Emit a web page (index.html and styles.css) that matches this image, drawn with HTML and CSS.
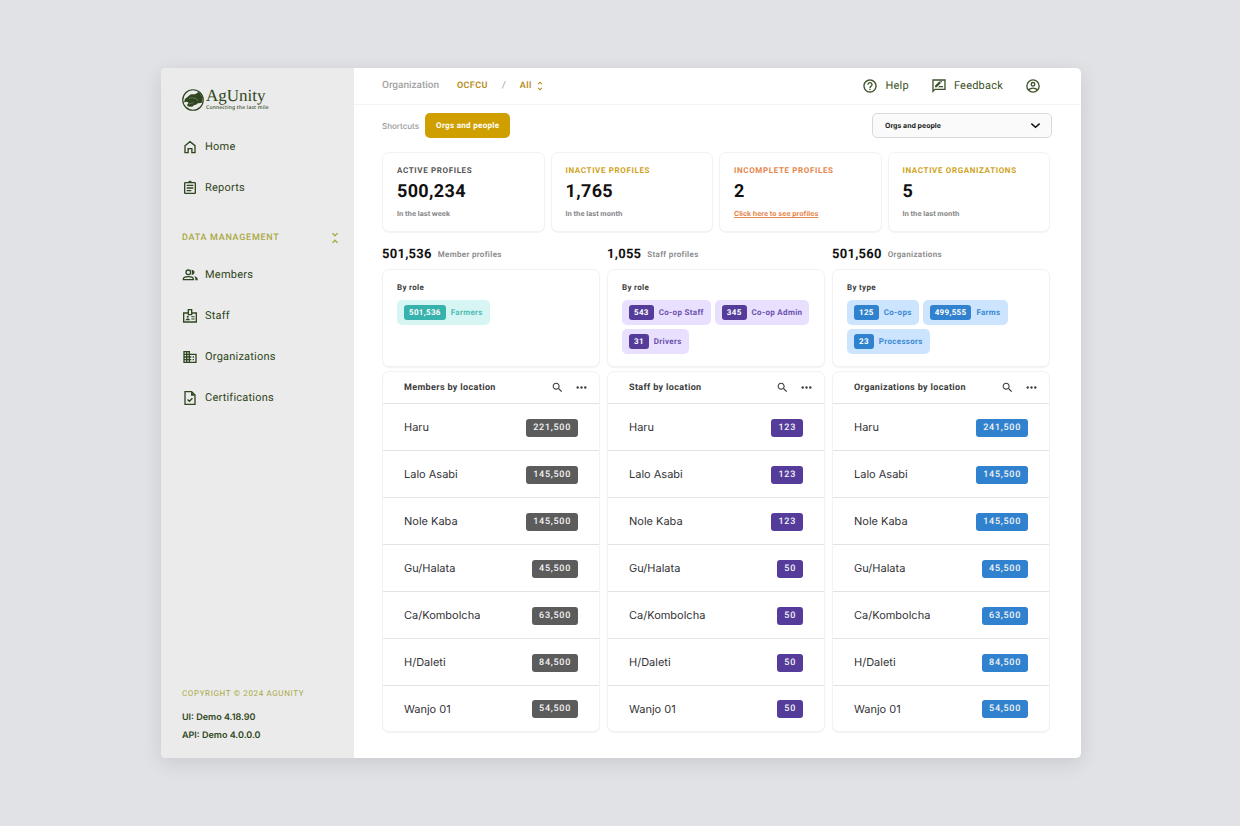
FILE: index.html
```html
<!DOCTYPE html>
<html lang="en">
<head>
<meta charset="utf-8">
<meta name="viewport" content="width=device-width, initial-scale=1">
<title>AgUnity – Orgs and people</title>
<link rel="stylesheet" href="styles.css">
</head>
<body>
<svg class="sprite" aria-hidden="true">
  <symbol id="i-search" viewBox="0 0 24 24"><path d="M15.5 14h-.79l-.28-.27C15.41 12.59 16 11.11 16 9.5 16 5.91 13.09 3 9.5 3S3 5.91 3 9.5 5.91 16 9.5 16c1.61 0 3.09-.59 4.23-1.57l.27.28v.79l5 4.99L20.49 19l-4.99-5zm-6 0C7.01 14 5 11.99 5 9.5S7.01 5 9.5 5 14 7.01 14 9.5 11.99 14 9.5 14z"/></symbol>
  <symbol id="i-more" viewBox="0 0 24 24"><circle cx="5" cy="12" r="2.200"/><circle cx="12" cy="12" r="2.200"/><circle cx="19" cy="12" r="2.200"/></symbol>
</svg>
<div class="window">
  <aside class="sidebar">
    <a class="logo" href="#" aria-label="AgUnity home">
      <svg class="logo-mark" viewBox="0 0 44 44" aria-hidden="true">
        <circle cx="22" cy="22" r="20.500" fill="none" stroke="currentColor" stroke-width="2.400"/>
        <path d="M7 19c4-2 6-6 10-8 4-1.500 7 0 10-1l6-4c5 4 8 9 8 15 0 3-1 5-2 7-3 0-5 1-7 0-2 3-5 4-8 4-1 3-4 4-7 3-3 1-6 0-7-3l3-4c-2-3-5-3-8-1-1-3 0-6 2-8z" fill="currentColor"/>
        <path d="M14 20c3-3 6-3 9-2 4 1 7 1 9 6M14 30c3-2 6-1 9-3" fill="none" stroke="#ebebeb" stroke-width="0.900" opacity="0.600"/>
      </svg>
      <span class="logo-words"><span class="logo-name">AgUnity</span><span class="logo-tag">Connecting the last mile</span></span>
    </a>
    <nav class="nav">
      <a class="nav-item" href="#"><svg class="icon" viewBox="0 0 24 24" aria-hidden="true"><path class="line" d="M4.500 10 12 4l7.500 6v10.500h-4.700V14.500h-5.600v6H4.500z"/></svg>Home</a>
      <a class="nav-item" href="#"><svg class="icon" viewBox="0 0 24 24" aria-hidden="true"><path d="M7 15h7v2H7zm0-4h10v2H7zm0-4h10v2H7zm12-4h-4.180C14.400 1.840 13.300 1 12 1c-1.300 0-2.400.840-2.820 2H5c-1.100 0-2 .900-2 2v14c0 1.100.900 2 2 2h14c1.100 0 2-.900 2-2V5c0-1.100-.900-2-2-2zm0 16H5V5h14v14z"/></svg>Reports</a>
      <button class="nav-group" type="button">DATA MANAGEMENT<svg class="icon" viewBox="0 0 24 24" aria-hidden="true"><path d="M7.410 18.590 8.830 20 12 16.830 15.170 20l1.410-1.410L12 14l-4.590 4.590zm9.180-13.180L15.170 4 12 7.170 8.830 4 7.410 5.410 12 10l4.590-4.590z"/></svg></button>
      <a class="nav-item" href="#"><svg class="icon" viewBox="0 0 24 24" aria-hidden="true"><circle class="line" cx="9.500" cy="8" r="3.500"/><path class="line" d="M2 19v-1c0-2.500 4-3.600 7.500-3.600S17 15.500 17 18v1z"/><path d="M14 12c2.500 0 4.800-1.500 4.800-4S16.500 4 14 4c1.600 2.400 1.600 5.600 0 8zM18 13.800c1.500 1.100 2 2.500 2 4.200v2h3.500v-2c0-2.200-2.600-3.700-5.500-4.200z"/></svg>Members</a>
      <a class="nav-item" href="#"><svg class="icon" viewBox="0 0 24 24" aria-hidden="true"><path class="line" d="M9.500 7.500H2.500v13.500h19V7.500h-7M9.500 10V2.500h5V10z"/><circle cx="8.700" cy="13.200" r="1.600"/><path d="M5.500 18.500c0-2.200 1.300-2.900 3.200-2.900s3.200.700 3.200 2.900zM14 12.500h5V14h-5zM14 15.800h5v1.500h-5z"/></svg>Staff</a>
      <a class="nav-item" href="#"><svg class="icon" viewBox="0 0 24 24" aria-hidden="true"><path d="M12 7V3H2v18h20V7H12zM6 19H4v-2h2v2zm0-4H4v-2h2v2zm0-4H4V9h2v2zm0-4H4V5h2v2zm4 12H8v-2h2v2zm0-4H8v-2h2v2zm0-4H8V9h2v2zm0-4H8V5h2v2zm10 12h-8v-2h2v-2h-2v-2h2v-2h-2V9h8v10zm-2-8h-2v2h2v-2zm0 4h-2v2h2v-2z"/></svg>Organizations</a>
      <a class="nav-item" href="#"><svg class="icon" viewBox="0 0 24 24" aria-hidden="true"><path class="line" d="M14.500 2.500H4.500v19h15V7.500zM8.300 14.300l2.700 2.700 4.700-4.700"/><path d="M13.500 2.500v6h6z"/></svg>Certifications</a>
    </nav>
    <footer class="side-foot">
      <p class="copyright">COPYRIGHT © 2024 AGUNITY</p>
      <p class="version">UI: Demo 4.18.90</p>
      <p class="version">API: Demo 4.0.0.0</p>
    </footer>
  </aside>

  <main class="main">
    <header class="topbar">
      <div class="crumbs">
        <span class="crumb-label">Organization</span>
        <a class="crumb" href="#">OCFCU</a>
        <span class="crumb-sep">/</span>
        <button class="crumb" type="button">All<svg class="crumb-icon" viewBox="0 0 24 24" aria-hidden="true"><path d="M12 5.830 15.170 9l1.410-1.410L12 3 7.410 7.590 8.830 9 12 5.830zm0 12.340L8.830 15l-1.410 1.410L12 21l4.590-4.590L15.170 15 12 18.170z"/></svg></button>
      </div>
      <div class="tools">
        <a class="tool" href="#"><svg class="icon" viewBox="0 0 24 24" aria-hidden="true"><path d="M11 18h2v-2h-2v2zm1-16C6.480 2 2 6.480 2 12s4.480 10 10 10 10-4.480 10-10S17.520 2 12 2zm0 18c-4.410 0-8-3.590-8-8s3.590-8 8-8 8 3.590 8 8-3.590 8-8 8zm0-14c-2.210 0-4 1.790-4 4h2c0-1.100.900-2 2-2s2 .900 2 2c0 2-3 1.750-3 5h2c0-2.250 3-2.500 3-5 0-2.210-1.790-4-4-4z"/></svg>Help</a>
        <a class="tool" href="#"><svg class="icon" viewBox="0 0 24 24" aria-hidden="true"><path class="line" d="M3 3h18v14H6l-3 3z"/><path d="M6 14v-2.500l6.500-6.500L15 7.500 8.500 14zM15.700 6.800l-2.500-2.500 1-1 2.500 2.500zM10.500 14l2-2H18v2z"/></svg>Feedback</a>
        <button class="tool" type="button" aria-label="Account"><svg class="icon" viewBox="0 0 24 24" aria-hidden="true"><circle class="line" cx="12" cy="12" r="9.200"/><circle class="line" cx="12" cy="9.500" r="2.700"/><path class="line" d="M5.500 18c1.500-2 4-2.800 6.500-2.800s5 .800 6.500 2.800"/></svg></button>
      </div>
    </header>

    <div class="shortcuts">
      <span class="shortcuts-label">Shortcuts</span>
      <button class="shortcut" type="button">Orgs and people</button>
      <div class="picker">
        <select class="picker-select" aria-label="View"><option>Orgs and people</option></select>
        <svg class="picker-icon" viewBox="0 0 24 24" aria-hidden="true"><path d="m3 8 9 8 9-8" fill="none" stroke="currentColor" stroke-width="3.200"/></svg>
      </div>
    </div>

    <div class="content">
      <section class="stats">
        <article class="card stat"><h2 class="stat-title">ACTIVE PROFILES</h2><p class="stat-value">500,234</p><p class="stat-note">In the last week</p></article>
        <article class="card stat"><h2 class="stat-title gold">INACTIVE PROFILES</h2><p class="stat-value">1,765</p><p class="stat-note">In the last month</p></article>
        <article class="card stat"><h2 class="stat-title orange">INCOMPLETE PROFILES</h2><p class="stat-value">2</p><p class="stat-note"><a class="stat-link" href="#">Click here to see profiles</a></p></article>
        <article class="card stat"><h2 class="stat-title gold">INACTIVE ORGANIZATIONS</h2><p class="stat-value">5</p><p class="stat-note">In the last month</p></article>
      </section>

      <div class="groups">
        <section class="group members">
          <h2 class="total"><span class="total-value">501,536</span><span class="total-label">Member profiles</span></h2>
          <div class="card roles">
            <h3 class="roles-title">By role</h3>
            <ul class="chips">
              <li class="chip"><span class="chip-count">501,536</span>Farmers</li>
            </ul>
          </div>
          <div class="card">
            <table class="places">
              <thead><tr><th scope="col">Members by location</th><th class="actions"><button type="button" class="action" aria-label="Search members"><svg viewBox="0 0 24 24"><use href="#i-search"/></svg></button><button type="button" class="action" aria-label="More member options"><svg viewBox="0 0 24 24"><use href="#i-more"/></svg></button></th></tr></thead>
              <tbody>
                <tr><td>Haru</td><td><span class="count">221,500</span></td></tr>
                <tr><td>Lalo Asabi</td><td><span class="count">145,500</span></td></tr>
                <tr><td>Nole Kaba</td><td><span class="count">145,500</span></td></tr>
                <tr><td>Gu/Halata</td><td><span class="count">45,500</span></td></tr>
                <tr><td>Ca/Kombolcha</td><td><span class="count">63,500</span></td></tr>
                <tr><td>H/Daleti</td><td><span class="count">84,500</span></td></tr>
                <tr><td>Wanjo 01</td><td><span class="count">54,500</span></td></tr>
              </tbody>
            </table>
          </div>
        </section>

        <section class="group staff">
          <h2 class="total"><span class="total-value">1,055</span><span class="total-label">Staff profiles</span></h2>
          <div class="card roles">
            <h3 class="roles-title">By role</h3>
            <ul class="chips">
              <li class="chip"><span class="chip-count">543</span>Co-op Staff</li>
              <li class="chip"><span class="chip-count">345</span>Co-op Admin</li>
              <li class="chip"><span class="chip-count">31</span>Drivers</li>
            </ul>
          </div>
          <div class="card">
            <table class="places">
              <thead><tr><th scope="col">Staff by location</th><th class="actions"><button type="button" class="action" aria-label="Search staff"><svg viewBox="0 0 24 24"><use href="#i-search"/></svg></button><button type="button" class="action" aria-label="More staff options"><svg viewBox="0 0 24 24"><use href="#i-more"/></svg></button></th></tr></thead>
              <tbody>
                <tr><td>Haru</td><td><span class="count">123</span></td></tr>
                <tr><td>Lalo Asabi</td><td><span class="count">123</span></td></tr>
                <tr><td>Nole Kaba</td><td><span class="count">123</span></td></tr>
                <tr><td>Gu/Halata</td><td><span class="count">50</span></td></tr>
                <tr><td>Ca/Kombolcha</td><td><span class="count">50</span></td></tr>
                <tr><td>H/Daleti</td><td><span class="count">50</span></td></tr>
                <tr><td>Wanjo 01</td><td><span class="count">50</span></td></tr>
              </tbody>
            </table>
          </div>
        </section>

        <section class="group orgs">
          <h2 class="total"><span class="total-value">501,560</span><span class="total-label">Organizations</span></h2>
          <div class="card roles">
            <h3 class="roles-title">By type</h3>
            <ul class="chips">
              <li class="chip"><span class="chip-count">125</span>Co-ops</li>
              <li class="chip"><span class="chip-count">499,555</span>Farms</li>
              <li class="chip"><span class="chip-count">23</span>Processors</li>
            </ul>
          </div>
          <div class="card">
            <table class="places">
              <thead><tr><th scope="col">Organizations by location</th><th class="actions"><button type="button" class="action" aria-label="Search organizations"><svg viewBox="0 0 24 24"><use href="#i-search"/></svg></button><button type="button" class="action" aria-label="More organization options"><svg viewBox="0 0 24 24"><use href="#i-more"/></svg></button></th></tr></thead>
              <tbody>
                <tr><td>Haru</td><td><span class="count">241,500</span></td></tr>
                <tr><td>Lalo Asabi</td><td><span class="count">145,500</span></td></tr>
                <tr><td>Nole Kaba</td><td><span class="count">145,500</span></td></tr>
                <tr><td>Gu/Halata</td><td><span class="count">45,500</span></td></tr>
                <tr><td>Ca/Kombolcha</td><td><span class="count">63,500</span></td></tr>
                <tr><td>H/Daleti</td><td><span class="count">84,500</span></td></tr>
                <tr><td>Wanjo 01</td><td><span class="count">54,500</span></td></tr>
              </tbody>
            </table>
          </div>
        </section>
      </div>
    </div>
  </main>
</div>
</body>
</html>
```

FILE: styles.css
```css
:root {
  --green: #2f4620;
  --olive: #a9a93f;
  --gold: #cf9f00;
  --tracking: 0.04em;
  --tracking-tight: 0.02em;
}

* { box-sizing: border-box; }

body {
  margin: 0;
  min-height: 100vh;
  padding: 68px 159px 68px 161px;
  display: flex;
  background: #e1e2e6;
  font: 400 11px/16px Roboto, sans-serif;
  color: #111;
  text-rendering: geometricPrecision;
}

h2, h3, p, ul { margin: 0; padding: 0; font-size: inherit; }
a { color: inherit; text-decoration: none; }
button { border: 0; padding: 0; background: none; font: inherit; color: inherit; letter-spacing: inherit; text-rendering: inherit; cursor: pointer; }
svg { display: block; fill: currentColor; }
.line { fill: none; stroke: currentColor; stroke-width: 2; }
.sprite { display: none; }

.window {
  flex: 1;
  display: flex;
  border-radius: 5px;
  overflow: hidden;
  background: #fff;
  box-shadow: 0 5px 20px rgba(0, 0, 20, 0.11);
}

/* Sidebar */
.sidebar {
  flex: 0 0 193px;
  display: flex;
  flex-direction: column;
  padding: 20px 11px 13px 21px;
  background: #ebebeb;
  color: var(--green);
}
.logo { display: flex; align-items: center; gap: 2px; height: 24px; }
.logo-mark { width: 22px; height: 22px; }
.logo-words { display: flex; flex-direction: column; }
.logo-name { font: 17px/16px "Liberation Serif", serif; }
.logo-tag { font: 500 5px/8px "Noto Sans", sans-serif; letter-spacing: var(--tracking); }

.nav { display: flex; flex-direction: column; gap: 9px; padding-top: 19px; letter-spacing: var(--tracking-tight); }
.nav-item { display: flex; align-items: center; gap: 7px; height: 32px; }
.icon { width: 16px; height: 16px; }
.nav-group {
  display: flex;
  align-items: center;
  justify-content: space-between;
  height: 32px;
  margin: 9px 0 -4px;
  color: var(--olive);
  font-size: 9px;
  font-weight: 500;
  letter-spacing: 0.08em;
}

.side-foot { margin-top: auto; }
.copyright { margin-bottom: 7px; color: var(--olive); font-size: 8px; letter-spacing: 0.08em; }
.version { font: 600 9px/18px Inter, sans-serif; }

/* Top bar */
.main { flex: 1; min-width: 0; }
.topbar {
  display: flex;
  justify-content: space-between;
  align-items: center;
  height: 37px;
  padding: 0 40px 0 28px;
  border-bottom: 1px solid #f4f4f4;
}
.crumbs { display: flex; align-items: center; color: #a3a3a3; font-size: 10px; }
.crumb-label { margin-right: 18px; font-weight: 500; }
.crumb { display: flex; align-items: center; gap: 2px; color: #b58c18; font-size: 9px; font-weight: 600; letter-spacing: var(--tracking); }
.crumb-sep { margin: 0 14px; }
.crumb-icon { width: 12px; height: 12px; }
.tools { display: flex; align-items: center; gap: 22px; color: #3d5229; letter-spacing: var(--tracking-tight); }
.tool { display: flex; align-items: center; gap: 7px; }

/* Shortcuts */
.shortcuts { display: flex; align-items: center; padding: 8px 29px 0 28px; }
.shortcuts-label { margin-right: 6px; color: #9a9a9a; font: 500 8px/16px Inter, sans-serif; }
.shortcut {
  height: 25px;
  padding: 0 11px;
  border-radius: 5px;
  background: var(--gold);
  color: #fff;
  font-size: 8px;
  font-weight: 700;
  letter-spacing: var(--tracking);
}
.picker { display: grid; align-items: center; width: 180px; margin-left: auto; }
.picker-select {
  grid-area: 1 / 1;
  height: 25px;
  padding: 0 12px;
  border: 1px solid #d9d9d9;
  border-radius: 5px;
  background: #fafafa;
  color: #1b1b1b;
  font: 700 7px/16px Inter, sans-serif;
  text-rendering: inherit;
  appearance: none;
}
.picker-icon { grid-area: 1 / 1; justify-self: end; width: 11px; height: 11px; margin-right: 11px; pointer-events: none; }

/* Cards */
.content { padding: 14px 31px 26px 28px; }
.card { border: 1px solid #f2f2f2; border-radius: 7px; background: #fff; box-shadow: 0 1px 1px rgba(0, 0, 0, 0.05); }

.stats { display: grid; grid-template-columns: repeat(4, 1fr); gap: 6px; }
.stat { height: 80px; padding: 10px 14px; }
.stat-title { color: #555; font-size: 8px; line-height: 15px; font-weight: 700; letter-spacing: 0.08em; }
.stat-title.gold { color: #cfa21a; }
.stat-title.orange { color: #e5864a; }
.stat-value { font-size: 18px; line-height: 28px; font-weight: 700; letter-spacing: var(--tracking-tight); }
.stat-note { color: #858585; font: 700 7px/16px Inter, sans-serif; }
.stat-link { color: #e5864a; text-decoration: underline; }

.groups { display: grid; grid-template-columns: repeat(3, 1fr); gap: 7px; }
.total { display: flex; align-items: center; gap: 6px; height: 37px; padding-top: 8px; }
.total-value { font-size: 13px; font-weight: 700; letter-spacing: var(--tracking-tight); }
.total-label { color: #888; font-size: 8px; font-weight: 600; letter-spacing: var(--tracking); }
.roles { height: 98px; margin-bottom: 4px; padding: 10px 14px; }
.roles-title { margin-bottom: 4px; color: #3c3c3c; font-size: 8px; font-weight: 700; letter-spacing: var(--tracking); }

.chips { display: flex; flex-wrap: wrap; gap: 4px; margin-right: -6px; list-style: none; }
.chip {
  display: flex;
  align-items: center;
  gap: 5px;
  height: 25px;
  padding: 0 7px;
  border-radius: 5px;
  background: var(--chip-soft);
  color: var(--chip-text);
  font-size: 8px;
  font-weight: 700;
  letter-spacing: var(--tracking);
}
.chip-count { padding: 0 5px; border-radius: 3px; background: var(--chip); color: #fff; line-height: 15px; }

.members { --chip: #38b2ac; --chip-soft: #d7f5f3; --chip-text: #4fbdb7; --badge: #5c5c5c; }
.staff { --chip: #553c9a; --chip-soft: #e9dfff; --chip-text: #6b52ad; --badge: #553c9a; }
.orgs { --chip: #3182ce; --chip-soft: #cce4fe; --chip-text: #3d8ad4; --badge: #3182ce; }

/* Location tables */
.places { width: 100%; border-collapse: separate; border-spacing: 0; }
.places th, .places td { padding: 0 21px; text-align: left; border-bottom: 1px solid #e3e3e3; }
.places th { height: 32px; color: #3c3c3c; font-size: 9px; font-weight: 700; letter-spacing: var(--tracking); }
.places td { height: 47px; color: #333338; font-family: Inter, sans-serif; }
.places tbody tr:last-child td { border-bottom: 0; height: 45px; }
.places th:first-child, .places td:first-child { padding-right: 0; white-space: nowrap; }
.places td:last-child { padding-left: 0; text-align: right; }
.places .actions { padding: 0 11px 0 0; text-align: right; white-space: nowrap; }
.action { display: inline-block; vertical-align: middle; }
.action + .action { margin-left: 11px; }
.action svg { width: 13px; height: 13px; }
.count {
  display: inline-block;
  padding: 0 7px;
  border-radius: 3px;
  background: var(--badge);
  color: #f4f4f4;
  font: 500 9px/18px Roboto, sans-serif;
  letter-spacing: 0.08em;
}
```
